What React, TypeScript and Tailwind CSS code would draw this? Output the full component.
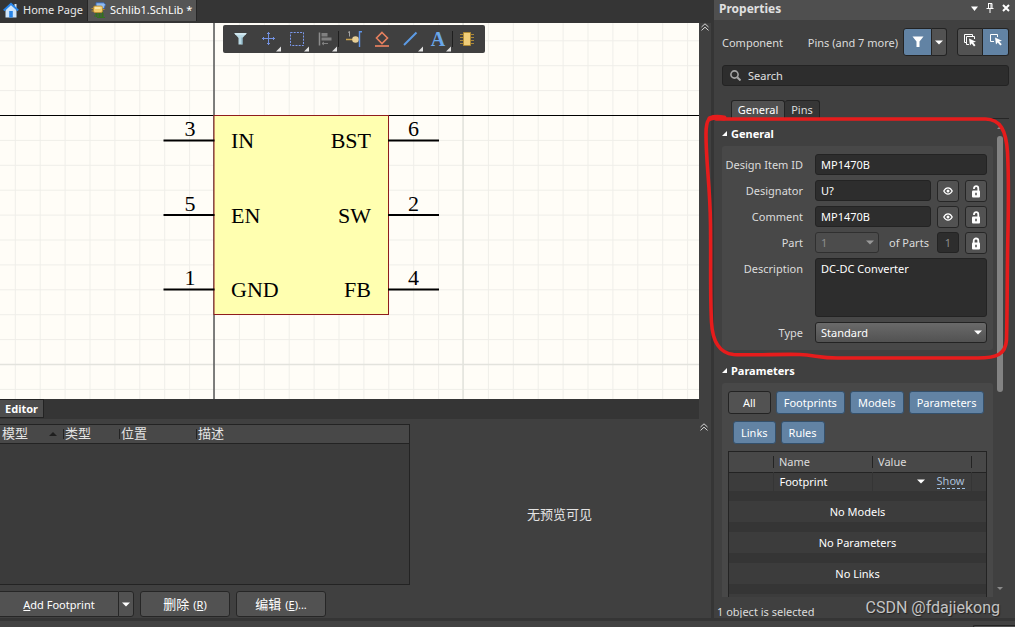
import { useId } from "react";
import type { ReactNode } from "react";

const DARK_BTN =
  "flex items-center justify-center rounded-[3px] border border-[#262626] bg-[#525252]";
const INPUT =
  "min-w-0 h-[21px] rounded-[3px] border border-[#232323] bg-[#2d2d2d] px-[5px] text-white outline-none";

const pins = [
  { y: 140.5, left: ["3", "IN"], right: ["6", "BST"] },
  { y: 215, left: ["5", "EN"], right: ["2", "SW"] },
  { y: 289.5, left: ["1", "GND"], right: ["4", "FB"] },
];

const filters = ["Footprints", "Models", "Parameters", "Links", "Rules"];
const emptyRows = ["No Models", "No Parameters", "No Links"];

const Caret = ({ className = "text-white" }: { className?: string }) => (
  <svg width="8" height="5" viewBox="0 0 8 5" className={className}>
    <path d="M0 .5h8L4 4.5z" fill="currentColor" />
  </svg>
);

const DoubleChevron = () => (
  <svg width="8" height="8" viewBox="0 0 8 8" fill="none" stroke="#d6d6d6">
    <path d="M.5 4 4 .8 7.5 4M.5 7.4 4 4.2l3.5 3.2" />
  </svg>
);

const HomeIcon = () => (
  <svg width="16" height="16" viewBox="0 0 16 16">
    <path d="M2.500 7.500 8 2.500l5.500 5V15.500h-11z" fill="#cfe5fa" />
    <path d="M11.500 2h2v4h-2z" fill="#cfe5fa" />
    <path d="M.8 8.500 8 1.800l7.200 6.700" fill="none" stroke="#2583e8" strokeWidth="2" />
    <path d="M6.200 9h3.600v6.500H6.200z" fill="#2583e8" />
  </svg>
);

const SchLibIcon = () => (
  <svg width="16" height="16" viewBox="0 0 16 16">
    <path d="M5 .8h7.500l2 1.700-1.500 4H11L5 4z" fill="#8fb9ef" stroke="#3567b5" strokeWidth=".9" />
    <path d="M4 12h9M3 14h10M6 15.500h8M5.500 11v4M8.500 11v5M11.500 9v6" stroke="#33701f" strokeWidth="1.100" />
    <rect x="2.500" y="4" width="9" height="6.500" rx="1.500" fill="#f3cc6b" stroke="#b98a2c" strokeWidth=".8" />
    <path d="M4 6h5.500" stroke="#fff0bd" strokeWidth="1.400" />
    <path d="M.5 6.500h2M.5 9h2M11.500 7.500h2" stroke="#b98a2c" />
  </svg>
);

const EyeIcon = () => (
  <svg width="10" height="8" viewBox="0 0 10 8" fill="none" stroke="#fff">
    <path d="M.8 4c2.200-4.200 6.200-4.200 8.400 0-2.200 4.200-6.200 4.200-8.400 0z" strokeWidth="1.300" />
    <circle cx="5" cy="4" r="1.500" fill="#fff" stroke="none" />
  </svg>
);

const LockIcon = ({ open }: { open?: boolean }) => (
  <svg width="10" height="13" viewBox="0 0 10 13">
    <path
      d={open ? "M3 4V3.200C3 .5 7.300.5 7.300 3.400V6.500" : "M2.700 6.500V3.800C2.700.7 7.300.7 7.300 3.800v2.700"}
      fill="none"
      stroke="#fff"
      strokeWidth="1.800"
    />
    <rect x="1" y="5.500" width="8" height="7" rx="1" fill="#fff" />
    <path d="M5 7.800v2.400" stroke="#4a4a4a" strokeWidth="1.500" />
  </svg>
);

const Tool = ({ label, menu, children }: { label: string; menu?: boolean; children: ReactNode }) => (
  <button aria-label={label} className="h-7 w-7 shrink-0">
    <svg width="28" height="28" viewBox="0 0 28 28" fill="none">
      {children}
      {menu && <path d="M27 21.500v5h-5z" fill="#e2e2e2" />}
    </svg>
  </button>
);

const Divider = () => (
  <span className="flex w-[2px] items-center">
    <span className="h-4 w-px bg-[#1f1f1f]" />
  </span>
);

const Toolbar = () => (
  <div className="absolute left-[223px] top-[2px] flex h-7 rounded-[2px] bg-[#404040] px-[3px]">
    <Tool label="Filter">
      <path d="M8 8h13l-4.500 5v6.500h-4V13z" fill="#b9d9e4" />
      <path d="M9 9h11" stroke="#e8f6fa" />
      <path d="M16 12.500v7" stroke="#7fa9bb" />
    </Tool>
    <Tool label="Move" menu>
      <path d="M14.500 7v13M8 13.500h13M13 8.500h3M13 18.500h3M9.500 12v3M19.500 12v3" stroke="#7391e0" />
    </Tool>
    <Tool label="Select" menu>
      <rect x="8.500" y="7.500" width="13" height="13" stroke="#7c9aee" strokeDasharray="2 1.200" />
    </Tool>
    <Tool label="Align" menu>
      <path d="M9.500 7.500v13" stroke="#8c8c8c" strokeWidth="1.500" />
      <path d="M11.500 8h6v3.500h-6zM11.500 12.500h10v3h-10z" fill="#808080" />
      <path d="M12 18.500h6M14 17l-2 1.500 2 1.500" stroke="#808080" />
    </Tool>
    <Divider />
    <Tool label="Place pin">
      <path d="M6 14.500h7" stroke="#c9a24e" strokeWidth="1.500" />
      <circle cx="15.500" cy="14.500" r="3.300" fill="#e8cf95" />
      <path d="M8 7.500l1.500-1v5" stroke="#a5a5a5" />
      <path d="M22 6.700h-2.500V22" stroke="#5e94e8" strokeWidth="1.400" />
    </Tool>
    <Tool label="Place part body">
      <path d="M14 7.500l5.500 5.500-5.500 5.500L8.500 13z" stroke="#e6805f" strokeWidth="1.600" />
      <path d="M7 21h14" stroke="#e6805f" strokeWidth="1.700" />
    </Tool>
    <Tool label="Place line" menu>
      <path d="M8 20 20.500 7.500" stroke="#5c9be6" strokeWidth="2" />
    </Tool>
    <Tool label="Place text" menu>
      <text x="14" y="21" textAnchor="middle" fill="#6aa7ea" fontSize="20" fontWeight="700" fontFamily="Liberation Serif, serif">
        A
      </text>
    </Tool>
    <Divider />
    <Tool label="Add part">
      <path d="M6 9.500h14M6 12.500h14M6 15.500h14M6 18.500h14" stroke="#a8873c" />
      <path d="M9.500 7.500h7v13h-7z" fill="#f0cd78" stroke="#b08a33" />
    </Tool>
  </div>
);

const Schematic = () => (
  <svg className="block h-full w-full bg-[#fffdf7]" aria-label="MP1470B symbol">
    <defs>
      <pattern id="grid" x="214" y="92" width="24.900" height="24.900" patternUnits="userSpaceOnUse">
        <path d="M.5 0v24.900M0 .5h24.900" stroke="#efeee9" />
      </pattern>
    </defs>
    <rect width="100%" height="100%" fill="url(#grid)" />
    <path d="M463 0v2000M0 341.500h3000" stroke="#e3e3dd" strokeWidth="1.500" />
    <path d="M0 92.500h3000" stroke="#000" />
    <path d="M214 0v2000" stroke="#555" strokeWidth="1.500" />
    <g transform="translate(0 -23)">
      <rect x="214" y="115.500" width="174.500" height="199" fill="#ffffb0" stroke="#8f1d1d" />
      <g fontFamily="Liberation Serif, Times New Roman, serif" fontSize="22" fill="#000">
        {pins.map(({ y, left, right }) => (
          <g key={y}>
            <path d={`M163.500 ${y}H214.500M388 ${y}H439`} stroke="#000" strokeWidth="2.200" />
            <text x="190" y={y - 4.5} textAnchor="middle">{left[0]}</text>
            <text x="231" y={y + 7.5}>{left[1]}</text>
            <text x="371" y={y + 7.5} textAnchor="end">{right[1]}</text>
            <text x="413.500" y={y - 4.5} textAnchor="middle">{right[0]}</text>
          </g>
        ))}
      </g>
    </g>
  </svg>
);

const ModelPanel = () => (
  <div className="flex h-[199px] shrink-0">
    <div className="flex w-[410px] shrink-0 flex-col pt-[5px]">
      <div className="h-[161px] border border-l-0 border-[#232323] bg-[#3b3b3b]">
        <table className="w-full table-fixed border-collapse text-[13px] leading-[17px] text-[#e4e4e4]">
          <thead>
            <tr className="h-[18px] border-b border-[#232323] bg-[#484848] text-left">
              <th className="w-[63px] p-0 pl-[2px] font-normal">
                <span className="flex items-center justify-between pr-[6px]">
                  模型
                  <svg width="8" height="4" viewBox="0 0 8 4">
                    <path d="M0 4 4 0l4 4z" fill="#1f1f1f" />
                  </svg>
                </span>
              </th>
              <th className="w-[56px] p-0 font-normal">
                <span className="flex items-center gap-px"><i className="h-[10px] w-px bg-[#232323]" />类型</span>
              </th>
              <th className="w-[77px] p-0 font-normal">
                <span className="flex items-center gap-px"><i className="h-[10px] w-px bg-[#232323]" />位置</span>
              </th>
              <th className="p-0 font-normal">
                <span className="flex items-center gap-px"><i className="h-[10px] w-px bg-[#232323]" />描述</span>
              </th>
            </tr>
          </thead>
        </table>
      </div>
      <div className="mt-[6px] flex h-[26px] gap-[6px]">
        <div className="flex">
          <button className={`${DARK_BTN} w-[118px] rounded-l-none rounded-r-none border-l-0 border-r-0 text-white`}>
            <span><u>A</u>dd Footprint</span>
          </button>
          <button aria-label="More footprint actions" className={`${DARK_BTN} w-[16px] rounded-l-none`}>
            <Caret />
          </button>
        </div>
        <button className={`${DARK_BTN} w-[90px] gap-1 text-white`}>
          <span className="text-[13px]">删除</span><span>(<u>R</u>)</span>
        </button>
        <button className={`${DARK_BTN} w-[90px] gap-1 text-white`}>
          <span className="text-[13px]">编辑</span><span>(<u>E</u>)...</span>
        </button>
      </div>
    </div>
    <div className="flex flex-1 items-center justify-center pb-2 pl-[10px] pr-[12px] text-[13px] text-[#e4e4e4]">
      无预览可见
    </div>
  </div>
);

const Workspace = () => (
  <main className="flex min-w-0 flex-1 flex-col">
    <nav className="flex h-[23px] shrink-0 items-start bg-[#353535]">
      <button className="flex h-[19px] w-[87px] items-center gap-1 whitespace-nowrap pl-[3px] text-[#e8e8e8]">
        <HomeIcon />
        Home Page
      </button>
      <button className="flex h-[21px] w-[110px] items-center gap-[3px] whitespace-nowrap border-x border-[#262626] bg-[#555] pb-[2px] pl-[3px] text-white">
        <SchLibIcon />
        Schlib1.SchLib *
      </button>
    </nav>
    <div className="flex min-h-0 flex-1">
      <div className="flex min-w-0 flex-1 flex-col">
        <div className="relative min-h-0 flex-1 overflow-hidden">
          <Schematic />
          <Toolbar />
        </div>
        <div className="h-5 shrink-0 bg-[#353535]">
          <button className="h-[19px] w-[44px] border border-l-0 border-[#232323] bg-[#4d4d4d] font-bold text-white">
            Editor
          </button>
        </div>
      </div>
      <button aria-label="Collapse canvas" className="flex w-3 shrink-0 items-start justify-center">
        <DoubleChevron />
      </button>
    </div>
    <div className="relative">
      <ModelPanel />
      <button aria-label="Collapse editor" className="absolute right-[3px] top-1">
        <DoubleChevron />
      </button>
    </div>
  </main>
);

const Field = ({ label, children }: { label: string; children: (id: string) => ReactNode }) => {
  const id = useId();
  return (
    <div className="flex gap-3">
      <label htmlFor={id} className="flex w-[75px] shrink-0 justify-end whitespace-nowrap leading-[21px]">
        {label}
      </label>
      <div className="flex min-w-0 flex-1 gap-[6px]">{children(id)}</div>
    </div>
  );
};

const IconButton = ({ label, children }: { label: string; children: ReactNode }) => (
  <button aria-label={label} className={`${DARK_BTN} h-[22px] w-[22px] shrink-0`}>
    {children}
  </button>
);

const SectionTitle = ({ children }: { children: ReactNode }) => (
  <h2 className="flex h-[15px] items-center gap-1 font-bold text-white">
    <svg width="5" height="5" viewBox="0 0 5 5">
      <path d="M5 0v5H0z" fill="#fff" />
    </svg>
    {children}
  </h2>
);

const GeneralSection = () => (
  <section className="pt-[7px]">
    <SectionTitle>General</SectionTitle>
    <div className="mt-[5px] flex flex-col gap-[5px] rounded-[3px] bg-[#484848] px-[6px] pb-[7px] pt-[8px]">
      <Field label="Design Item ID">
        {(id) => <input id={id} defaultValue="MP1470B" className={`${INPUT} flex-1`} />}
      </Field>
      {[["Designator", "U?"], ["Comment", "MP1470B"]].map(([label, value]) => (
        <div key={label} className="h-[21px]">
          <Field label={label}>
            {(id) => (
              <>
                <input id={id} defaultValue={value} className={`${INPUT} flex-1`} />
                <IconButton label={`Show ${label}`}><EyeIcon /></IconButton>
                <IconButton label={`Lock ${label}`}><LockIcon open /></IconButton>
              </>
            )}
          </Field>
        </div>
      ))}
      <div className="h-[21px]">
        <Field label="Part">
          {(id) => (
            <>
              <div className="relative h-[21px] w-[64px]">
                <select id={id} disabled className="h-full w-full appearance-none rounded-[3px] border border-[#303030] bg-[#4c4c4c] px-[5px] text-[#8c8c8c] opacity-100">
                  <option>1</option>
                </select>
                <span className="pointer-events-none absolute right-[5px] top-[8px]">
                  <Caret className="text-[#999]" />
                </span>
              </div>
              <label htmlFor="part-count" className="flex-1 whitespace-nowrap pl-[4px] leading-[21px]">of Parts</label>
              <input id="part-count" disabled defaultValue="1" className="h-[21px] w-[22px] shrink-0 rounded-[3px] border border-[#232323] bg-[#2d2d2d] text-center text-[#8c8c8c]" />
              <IconButton label="Lock Part"><LockIcon /></IconButton>
            </>
          )}
        </Field>
      </div>
      <Field label="Description">
        {(id) => (
          <textarea id={id} defaultValue="DC-DC Converter" className="h-[59px] min-w-0 flex-1 resize-none rounded-[3px] border border-[#232323] bg-[#2d2d2d] px-[5px] py-[2px] text-white outline-none" />
        )}
      </Field>
      <Field label="Type">
        {(id) => (
          <div className="relative h-[21px] min-w-0 flex-1">
            <select id={id} className="h-full w-full appearance-none rounded-[3px] border border-[#232323] bg-linear-to-b from-[#6a6a6a] to-[#525252] px-[5px] text-white">
              <option>Standard</option>
            </select>
            <span className="pointer-events-none absolute right-[5px] top-[8px]">
              <Caret />
            </span>
          </div>
        )}
      </Field>
    </div>
  </section>
);

const ParametersSection = () => (
  <section className="pt-[13px]">
    <SectionTitle>Parameters</SectionTitle>
    <div className="mt-[5px] rounded-t-[3px] bg-[#484848] px-[6px] pb-2 pt-[8px]">
      <div className="-mr-1 flex flex-wrap gap-y-[7px]">
        <button className="h-[23px] rounded-[3px] border border-[#232323] bg-[#525252] px-[14px] text-white">All</button>
        {filters.map((name) => (
          <button key={name} className="ml-[5px] h-[23px] rounded-[3px] border border-[#34506b] bg-[#6283a4] px-[7px] text-white">
            {name}
          </button>
        ))}
      </div>
      <div className="mt-[7px] border border-[#232323] bg-[#353535]">
        <table className="w-full table-fixed border-collapse">
          <thead>
            <tr className="h-5 border-b border-[#232323] bg-[#484848] text-left">
              <th className="w-[44px] p-0" />
              <th className="w-[99px] p-0 font-normal"><span className="block h-3 border-l border-[#232323] pl-[5px] leading-3">Name</span></th>
              <th className="p-0 font-normal"><span className="block h-3 border-l border-[#232323] pl-[5px] leading-3">Value</span></th>
              <th className="w-[15px] p-0"><span className="block h-3 border-l border-[#232323]" /></th>
            </tr>
          </thead>
          <tbody>
            <tr className="h-[19px] bg-[#3c3c3c]">
              <td className="border-r border-[#353535] p-0" />
              <td className="border-r border-[#353535] p-0 pl-[6px] text-white">Footprint</td>
              <td className="border-r border-[#353535] p-0">
                <span className="flex items-center justify-end gap-3 pr-[6px]">
                  <Caret />
                  <a href="#show" className="border-b border-dashed border-[#9cc0e6] leading-[14px] text-[#a9bfd8]">Show</a>
                </span>
              </td>
              <td className="p-0" />
            </tr>
            {emptyRows.map((row) => [
              <tr key={`${row}-gap`} className="h-[10px]"><td colSpan={4} className="p-0" /></tr>,
              <tr key={row} className="h-[21px] bg-[#3c3c3c]">
                <td colSpan={4} className="p-0 text-center text-white">{row}</td>
              </tr>,
            ])}
            <tr className="h-[10px]"><td colSpan={4} className="p-0" /></tr>
            <tr className="h-[21px] bg-[#3c3c3c]"><td colSpan={4} className="p-0" /></tr>
          </tbody>
        </table>
      </div>
    </div>
  </section>
);

const PropertiesPanel = () => (
  <aside className="flex w-[301px] shrink-0 flex-col">
    <header className="flex h-5 shrink-0 items-center justify-between bg-[#4f4f4f] pb-1 pl-[5px] pr-[5px]">
      <h1 className="text-[12px] font-bold text-[#e0e0e0]">Properties</h1>
      <div className="flex items-center gap-[8px]">
        <button aria-label="Panel menu">
          <svg width="7" height="5" viewBox="0 0 7 5" className="block"><path d="M0 .5h7L3.500 5z" fill="#fff" /></svg>
        </button>
        <button aria-label="Pin panel">
          <svg width="8" height="10" viewBox="0 0 8 10" fill="none" stroke="#fff" className="block">
            <path d="M2 .5h4v5M2.500.5v5M5 1v4.500M.5 5.500h7M4 6v4" />
          </svg>
        </button>
        <button aria-label="Close panel">
          <svg width="8" height="8" viewBox="0 0 8 8" stroke="#fff" strokeWidth="2" className="block"><path d="m1 1 6 6M7 1 1 7" /></svg>
        </button>
      </div>
    </header>

    <div className="mt-[8px] flex h-7 shrink-0 items-center pl-2 pr-[6px]">
      <span>Component</span>
      <span className="ml-auto whitespace-nowrap">Pins (and 7 more)</span>
      <div className="ml-[5px] flex h-7">
        <button aria-label="Filter objects" className="flex w-[29px] items-center justify-center rounded-l-[3px] border border-[#232323] bg-[#6283a4]">
          <svg width="12" height="12" viewBox="0 0 12 12"><path d="M.5.5h11L7.500 5.500v5.500h-3V5.500z" fill="#fff" /></svg>
        </button>
        <button aria-label="Filter menu" className="flex w-[15px] items-center justify-center rounded-r-[3px] border border-l-0 border-[#232323] bg-[#525252]">
          <Caret />
        </button>
      </div>
      <div className="ml-[10px] flex h-7">
        <button aria-label="Select many" className="flex w-[26px] items-center justify-center rounded-l-[3px] border border-[#232323] bg-[#525252] pb-1">
          <svg width="14" height="14" viewBox="0 0 14 14" fill="none" stroke="#fff">
            <path d="M3 9.500H1.500v-8h8V3M6 11.500H3.500v-8h8V6" />
            <path d="m6 5.500 1 7 1.700-2 2.300 3 1.500-1.200-2.300-2.800 2.800-.8z" fill="#fff" stroke="none" />
          </svg>
        </button>
        <button aria-label="Select one" className="flex w-[26px] items-center justify-center rounded-r-[3px] border border-l-0 border-[#232323] bg-[#6283a4] pb-1">
          <svg width="14" height="14" viewBox="0 0 14 14" fill="none" stroke="#fff">
            <path d="M5 8.500H1.500v-7h7V4" />
            <path d="m6 4.500 1 7 1.700-2 2.600 3 1.500-1.200-2.600-2.800 2.800-.8z" fill="#fff" stroke="none" />
          </svg>
        </button>
      </div>
    </div>

    <div className="ml-2 mr-[6px] mt-[9px] flex h-[21px] shrink-0 items-center gap-[7px] rounded-[3px] border border-[#232323] bg-[#2d2d2d] pl-[7px]">
      <svg width="11" height="11" viewBox="0 0 11 11" fill="none" stroke="#a5a5a5">
        <circle cx="4.500" cy="4.500" r="3.600" strokeWidth="1.600" />
        <path d="m7.200 7.200 3.300 3.300" strokeWidth="2" />
      </svg>
      <input aria-label="Search" placeholder="Search" className="min-w-0 flex-1 bg-transparent text-white outline-none placeholder:text-[#e0e0e0]" />
    </div>

    <div className="ml-2 mr-[6px] mt-[14px] flex h-[19px] shrink-0 border-b border-[#262626] pl-[9px]">
      <button className="w-[54px] rounded-t-[3px] border border-b-0 border-[#232323] bg-[#505050] text-white">General</button>
      <button className="w-[35px] rounded-t-[3px] border border-b-0 border-l-0 border-[#232323] bg-[#363636]">Pins</button>
    </div>

    <div className="flex min-h-0 flex-1 overflow-hidden pl-2">
      <div className="min-w-0 flex-1">
        <GeneralSection />
        <ParametersSection />
      </div>
      <div className="ml-1 mr-[12px] flex w-[6px] shrink-0 flex-col items-center pb-[7px] pt-[7px]">
        <svg width="6" height="3" viewBox="0 0 6 3" className="shrink-0"><path d="M0 3 3 0l3 3z" fill="#8a8a8a" /></svg>
        <span className="mt-[7px] h-[256px] w-[6px] rounded-full bg-[#838383]" />
        <svg width="6" height="3" viewBox="0 0 6 3" className="mt-auto shrink-0"><path d="m0 0 3 3 3-3z" fill="#8a8a8a" /></svg>
      </div>
    </div>

    <div className="flex h-[21px] shrink-0 items-center pl-[3px] pt-[8px]">1 object is selected</div>
  </aside>
);

const Markup = () => (
  <svg className="pointer-events-none absolute right-0 top-[110px]" width="315" height="256" viewBox="700 110 315 256" fill="none" stroke="#e61c1c" strokeLinecap="round" strokeLinejoin="round">
    <path
      d="M722 117.500C708 115 706 120 706 134c0 30 4 50 4.500 90 .5 40-.5 70 1 98 1 20 8 31 22 32.500 18 1 46-.5 66 0 15 .5 20 3.500 38 3.500h140c20 0 28-4 29-18 1-40 .5-70 1.500-110 .5-30 1-50-.5-78-1.500-22-7-32.500-22-33H716"
      strokeWidth="3.600"
    />
    <path d="M710 118.500c4-1.500 9-1.500 14-.5" strokeWidth="5" />
  </svg>
);

const App = () => {
  return (
    <div className="relative flex h-screen min-h-[560px] flex-col overflow-hidden bg-[#404040] font-['Noto_Sans','Noto_Sans_CJK_SC',sans-serif] text-[11px] leading-[15px] text-[#dcdcdc]">
      <div className="flex min-h-0 flex-1">
        <Workspace />
        <div className="w-[3px] shrink-0 bg-[#353535]" />
        <PropertiesPanel />
      </div>
      <footer className="flex h-[9px] shrink-0 items-end justify-end border-t-[3px] border-[#353535] bg-[#424242]">
        <span className="h-[2px] w-[42px] rounded-tl-[2px] border-l border-t border-[#232323] bg-[#525252]" />
      </footer>
      <Markup />
      <span className="absolute bottom-[9px] right-[15px] font-['Roboto',sans-serif] text-[16px] leading-5 text-[#c4c4c4] [text-shadow:1px_1px_1px_#222]">
        CSDN @fdajiekong
      </span>
    </div>
  );
};

export default App;
